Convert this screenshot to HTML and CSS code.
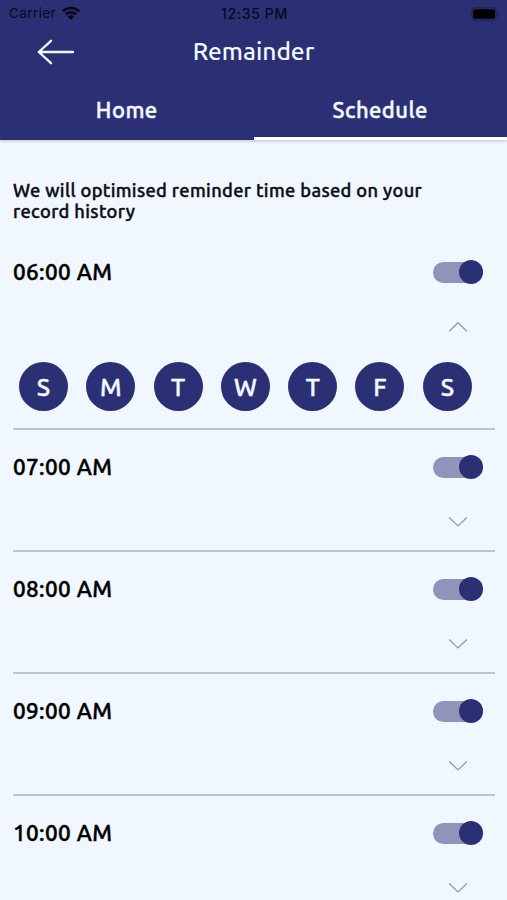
FILE: index.html
```html
<!DOCTYPE html>
<html lang="en">
<head>
<meta charset="utf-8">
<title>Remainder</title>
<link rel="stylesheet" href="styles.css">
</head>
<body>
<svg width="0" height="0" class="defs">
  <symbol id="down" viewBox="0 0 20 12"><path d="M1.2 1.5 10 9.9 18.8 1.5"/></symbol>
  <symbol id="up" viewBox="0 0 20 12"><path d="M1.2 10.2 10 1.8 18.8 10.2"/></symbol>
</svg>
<header class="header">
  <div class="status">
    <div class="carrier"><span>Carrier</span>
      <svg width="18" height="14" viewBox="0 0 18 14"><g fill="none" stroke="#07081a" stroke-width="2.6"><path d="M.9 5.3a11.6 11.6 0 0 1 16.2 0"/><path d="M3.9 8.5a7.3 7.3 0 0 1 10.2 0"/></g><path d="M9 13.8 5.9 10.7a4.5 4.5 0 0 1 6.2 0z" fill="#07081a"/></svg>
    </div>
    <span class="clock">12:35 PM</span>
    <svg class="battery" width="29" height="14" viewBox="0 0 29 14"><rect x=".8" y=".8" width="24.8" height="12.4" rx="3.5" fill="none" stroke="#1c2052"/><rect x="2.2" y="2.2" width="22" height="9.6" rx="2" fill="#000"/><path d="M27 5v4q1.6-.6 1.6-2T27 5z" fill="#1c2052"/></svg>
  </div>
  <div class="titlebar">
    <svg class="back" width="38" height="26" viewBox="0 0 38 26"><path d="M36 13H1.8M14 1.8 1.8 13 14 24.2"/></svg>
    <h1 class="title">Remainder</h1>
  </div>
  <nav class="tabs">
    <div class="tab home"><span>Home</span></div>
    <div class="tab active"><span>Schedule</span></div>
  </nav>
</header>
<main class="content">
  <p class="note">We will optimised reminder time based on your<br>record history</p>
  <section class="item open">
    <div class="row"><span class="time">06:00 AM</span><span class="toggle"><i class="knob"></i></span></div>
    <svg class="chev"><use href="#up"/></svg>
    <div class="days"><b>S</b><b>M</b><b>T</b><b>W</b><b>T</b><b>F</b><b>S</b></div>
  </section>
  <section class="item">
    <div class="row"><span class="time">07:00 AM</span><span class="toggle"><i class="knob"></i></span></div>
    <svg class="chev"><use href="#down"/></svg>
  </section>
  <section class="item">
    <div class="row"><span class="time">08:00 AM</span><span class="toggle"><i class="knob"></i></span></div>
    <svg class="chev"><use href="#down"/></svg>
  </section>
  <section class="item">
    <div class="row"><span class="time">09:00 AM</span><span class="toggle"><i class="knob"></i></span></div>
    <svg class="chev"><use href="#down"/></svg>
  </section>
  <section class="item">
    <div class="row"><span class="time">10:00 AM</span><span class="toggle"><i class="knob"></i></span></div>
    <svg class="chev"><use href="#down"/></svg>
  </section>
</main>
</body>
</html>
```
FILE: styles.css
```css
* { box-sizing: border-box; }
body {
  margin: 0;
  height: 900px;
  overflow: hidden;
  background: #f0f7ff;
  color: #0b0d12;
  font-family: "Ubuntu", "Noto Sans", sans-serif;
  font-weight: 500;
}
.defs { position: absolute; }
.header {
  height: 140px;
  background: #2b3075;
  color: #f3f8ff;
  box-shadow: 0 1px 3px rgba(60, 70, 90, .3);
}
.status {
  height: 27px;
  padding: 0 7px 0 9px;
  display: grid;
  grid-template-columns: 1fr auto 1fr;
  align-items: center;
  font: 400 13.5px/27px "Inter", sans-serif;
  color: #07081a;
}
.carrier { display: flex; align-items: center; gap: 6px; letter-spacing: .4px; }
.carrier svg { margin-top: -2px; }
.clock { font-weight: 500; font-size: 14px; letter-spacing: .65px; }
.battery { justify-self: end; }
.titlebar {
  height: 50px;
  padding-left: 37px;
  display: grid;
  grid-template-columns: 38px 1fr 75px;
  align-items: center;
}
.back { fill: none; stroke: #f3f8ff; stroke-width: 2.3; stroke-linecap: round; stroke-linejoin: round; }
.title { margin: 0; text-align: center; font-size: 24.5px; line-height: 46px; font-weight: 500; padding-bottom: 2px; }
.tabs { display: flex; height: 63px; }
.tab {
  flex: 1;
  text-align: center;
  font-size: 22px;
  line-height: 66px;
  font-weight: 500;
  letter-spacing: .45px;
  -webkit-text-stroke: .45px;
}
.active { border-bottom: 3px solid #fff; }
.content { padding: 40px 12px 0 13px; }
.note {
  margin: 0;
  height: 42px;
  font-size: 18.3px;
  line-height: 21px;
  white-space: nowrap;
  letter-spacing: .35px;
  -webkit-text-stroke: .4px;
}
.item { height: 122.1px; border-bottom: 2px solid #c0c3cb; padding: 20px 12px 0 0; }
.item.open { height: 208px; padding-top: 33px; }
.row { display: flex; justify-content: space-between; align-items: center; height: 34px; }
.time { font-size: 22.5px; line-height: 34px; color: #000; letter-spacing: .35px; -webkit-text-stroke: .45px; }
.toggle {
  width: 50px;
  height: 21px;
  border-radius: 11px;
  background: #9094bb;
  display: flex;
  align-items: center;
  justify-content: flex-end;
}
.knob { width: 24px; height: 24px; flex: none; border-radius: 50%; background: #2b3075; }
.chev {
  display: block;
  width: 20px;
  height: 12px;
  margin: 32px 15px 0 auto;
  fill: none;
  stroke: #989ca6;
  stroke-width: 1.4;
}
.days { display: flex; gap: 18.3px; margin: 29px 0 0 6px; }
.days b {
  width: 49px;
  height: 49px;
  flex: none;
  border-radius: 50%;
  background: #2b3075;
  color: #f3f8ff;
  text-align: center;
  font-size: 24.5px;
  line-height: 51px;
  font-weight: 500;
  -webkit-text-stroke: .45px;
}
```
